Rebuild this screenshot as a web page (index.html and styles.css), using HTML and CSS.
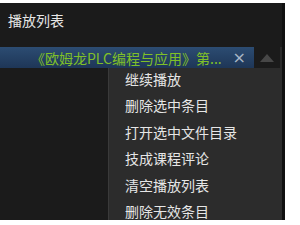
FILE: index.html
```html
<!DOCTYPE html>
<html>
<head>
<meta charset="utf-8">
<link rel="stylesheet" href="styles.css">
</head>
<body>
<div class="panel">
  <div class="title">播放列表</div>
  <div class="list">
    <div class="rows">
      <div class="row selected">
        <span class="name">《欧姆龙PLC编程与应用》第...</span>
        <span class="close">×</span>
      </div>
    </div>
    <div class="scrollbar">
      <svg class="arrow" width="14" height="8" viewBox="0 0 14 8"><polygon points="7,0 14,8 0,8" fill="#474747"/></svg>
    </div>
  </div>
  <ul class="menu">
    <li>继续播放</li>
    <li>删除选中条目</li>
    <li>打开选中文件目录</li>
    <li>技成课程评论</li>
    <li>清空播放列表</li>
    <li>删除无效条目</li>
  </ul>
</div>
</body>
</html>
```
FILE: styles.css
```css
html, body {
  margin: 0;
  padding: 0;
  background: #ffffff;
}
body {
  padding-top: 3px;
  font-family: "Noto Sans CJK SC", "Liberation Sans", sans-serif;
}
.panel {
  position: relative;
  width: 285px;
  height: 217px;
  background: #1b1b1b;
  display: flex;
  flex-direction: column;
  box-sizing: border-box;
  border-right: 3px solid #101010;
}
.title {
  height: 44px;
  box-sizing: border-box;
  padding: 7px 0 0 8px;
  color: #e6e6e6;
  font-size: 14px;
  line-height: 20px;
}
.list {
  display: flex;
  flex: 1;
}
.rows {
  width: 254px;
}
.row {
  height: 21px;
  display: flex;
  align-items: center;
  padding-left: 31px;
  padding-right: 8px;
  box-sizing: border-box;
}
.selected {
  background: linear-gradient(#2c4c72, #1e3657);
}
.name {
  flex: 1;
  color: #80c028;
  font-size: 14px;
  white-space: nowrap;
  overflow: hidden;
}
.close {
  color: #a9b6c6;
  font-family: "DejaVu Sans", sans-serif;
  font-size: 16px;
  line-height: 16px;
}
.scrollbar {
  flex: 1;
  display: flex;
  justify-content: center;
  border-right: 2px solid #2a2a2a;
}
.arrow {
  margin-top: 7px;
}
.menu {
  position: absolute;
  left: 108px;
  top: 65px;
  width: 174px;
  height: 152px;
  margin: 0;
  padding: 0 0 0 16px;
  box-sizing: border-box;
  list-style: none;
  background: #2c2c2c;
  border-left: 1px solid #3a3a3a;
  overflow: hidden;
}
.menu li {
  height: 26.4px;
  line-height: 22px;
  color: #e6e6e6;
  font-size: 14px;
}
```
